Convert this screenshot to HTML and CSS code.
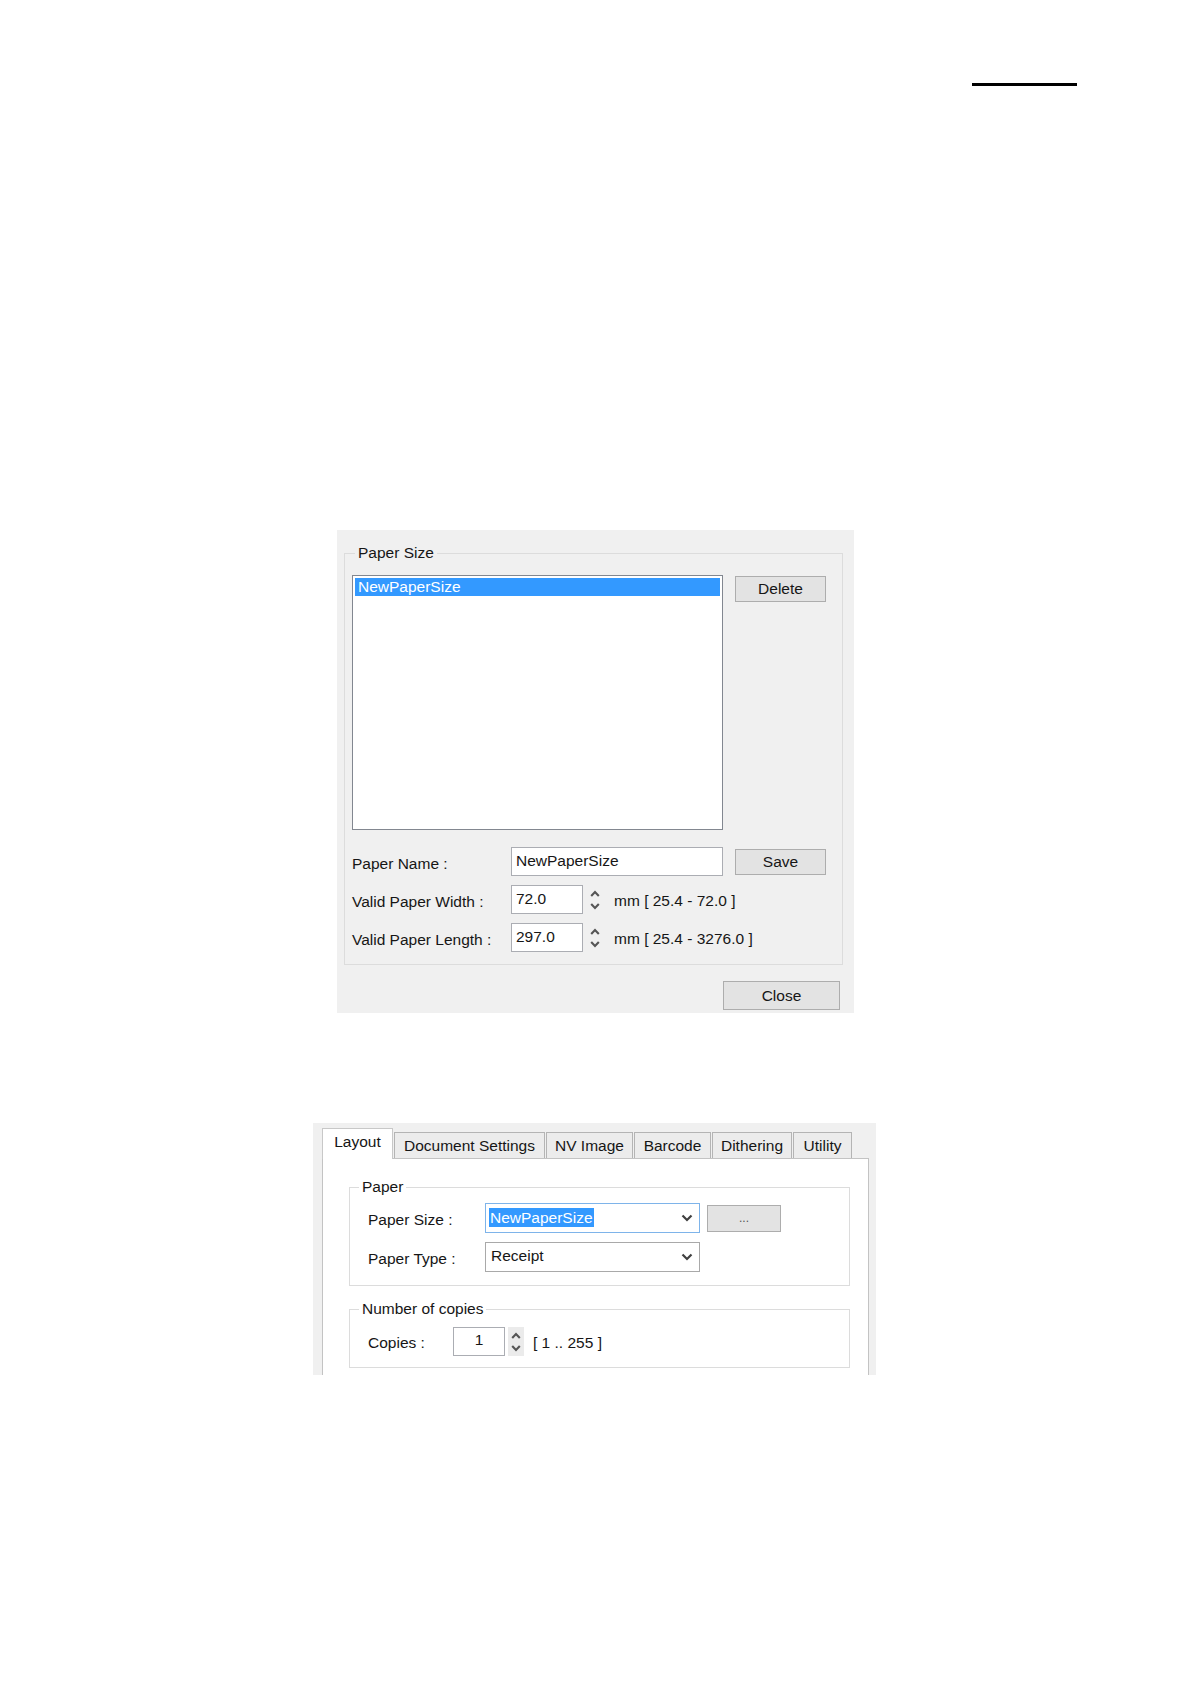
FILE: index.html
```html
<!DOCTYPE html>
<html lang="en">
<head>
<meta charset="utf-8">
<title>Paper Size</title>
<link rel="stylesheet" href="styles.css">
</head>
<body>
<div class="page">
  <div class="rule"></div>

  <div class="dlg dlg-paper">
    <fieldset class="grp grp-size">
      <legend>Paper Size</legend>
      <div class="list-row">
        <div class="listbox">
          <div class="item sel">NewPaperSize</div>
        </div>
        <div class="btn btn-side btn-delete">Delete</div>
      </div>
      <div class="form">
        <div class="row">
          <span class="lbl">Paper Name :</span>
          <div class="tb tb-name">NewPaperSize</div>
          <div class="btn btn-side">Save</div>
        </div>
        <div class="row">
          <span class="lbl">Valid Paper Width :</span>
          <div class="tb tb-num">72.0</div>
          <div class="spin">
            <svg width="10" height="7" viewBox="0 0 10 7"><path d="M1.2 6 L5 2 L8.8 6" fill="none" stroke="#555" stroke-width="2.1"/></svg>
            <svg width="10" height="7" viewBox="0 0 10 7"><path d="M1.2 1 L5 5 L8.8 1" fill="none" stroke="#555" stroke-width="2.1"/></svg>
          </div>
          <span class="unit">mm [ 25.4 - 72.0 ]</span>
        </div>
        <div class="row">
          <span class="lbl">Valid Paper Length :</span>
          <div class="tb tb-num">297.0</div>
          <div class="spin">
            <svg width="10" height="7" viewBox="0 0 10 7"><path d="M1.2 6 L5 2 L8.8 6" fill="none" stroke="#555" stroke-width="2.1"/></svg>
            <svg width="10" height="7" viewBox="0 0 10 7"><path d="M1.2 1 L5 5 L8.8 1" fill="none" stroke="#555" stroke-width="2.1"/></svg>
          </div>
          <span class="unit">mm [ 25.4 - 3276.0 ]</span>
        </div>
      </div>
    </fieldset>
    <div class="foot">
      <div class="btn btn-close">Close</div>
    </div>
  </div>

  <div class="dlg dlg-tabs">
    <div class="tabstrip">
      <div class="tab tab-sel w-layout">Layout</div>
      <div class="tab w-doc">Document Settings</div>
      <div class="tab w-nv">NV Image</div>
      <div class="tab w-bar">Barcode</div>
      <div class="tab w-dith">Dithering</div>
      <div class="tab w-util">Utility</div>
    </div>
    <div class="panel">
      <fieldset class="grp grp-paper">
        <legend>Paper</legend>
        <div class="prow">
          <span class="plbl">Paper Size :</span>
          <div class="combo combo-focus">
            <span class="hl">NewPaperSize</span>
            <svg class="chev" width="12" height="8" viewBox="0 0 12 8"><path d="M1.5 1.5 L6 6 L10.5 1.5" fill="none" stroke="#404040" stroke-width="2.2"/></svg>
          </div>
          <div class="btn btn-dots">...</div>
        </div>
        <div class="prow">
          <span class="plbl">Paper Type :</span>
          <div class="combo">
            <span class="ctext">Receipt</span>
            <svg class="chev" width="12" height="8" viewBox="0 0 12 8"><path d="M1.5 1.5 L6 6 L10.5 1.5" fill="none" stroke="#404040" stroke-width="2.2"/></svg>
          </div>
        </div>
      </fieldset>
      <fieldset class="grp grp-copies">
        <legend>Number of copies</legend>
        <div class="prow">
          <span class="clbl">Copies :</span>
          <div class="tb tb-copies">1</div>
          <div class="spin spin-box">
            <svg width="10" height="7" viewBox="0 0 10 7"><path d="M1.2 6 L5 2 L8.8 6" fill="none" stroke="#555" stroke-width="2.1"/></svg>
            <svg width="10" height="7" viewBox="0 0 10 7"><path d="M1.2 1 L5 5 L8.8 1" fill="none" stroke="#555" stroke-width="2.1"/></svg>
          </div>
          <span class="range">[ 1 .. 255 ]</span>
        </div>
      </fieldset>
    </div>
  </div>
</div>
</body>
</html>
```

FILE: styles.css
```css
* { box-sizing: border-box; }

body {
  margin: 0;
  background: #ffffff;
  font-family: "Liberation Sans", Arial, sans-serif;
  font-size: 15.5px;
  color: #161616;
}

.page {
  padding-top: 83px;
}

.rule {
  margin-left: 972px;
  width: 105px;
  border-top: 3px solid #000;
}

/* ---------- dialogs ---------- */
.dlg {
  background: #f0f0f0;
}

.dlg-paper {
  margin-top: 444px;
  margin-left: 337px;
  width: 517px;
  padding: 14px 11px 3px 7px;
}

/* group boxes */
.grp {
  margin: 0;
  border: 1px solid #dcdcdc;
  min-width: 0;
}

.grp legend {
  line-height: 18px;
  padding: 0 3px;
}

.grp-size {
  padding: 13px 16px 12px 7px;
}

.grp-size legend {
  margin-left: 3px;
}

.list-row {
  display: flex;
  align-items: flex-start;
}

.listbox {
  width: 371px;
  height: 255px;
  background: #fff;
  border: 1px solid #828790;
  padding: 2px;
}

.item {
  line-height: 18px;
  padding-left: 3px;
}

.item.sel {
  background: #3399ff;
  color: #fff;
}

.btn {
  background: #e3e3e3;
  border: 1px solid #adadad;
  display: flex;
  align-items: center;
  justify-content: center;
  color: #161616;
}

.btn-side {
  margin-left: 12px;
  width: 91px;
  height: 26px;
}

.btn-delete {
  margin-top: 1px;
}

.form {
  margin-top: 17px;
}

.row {
  display: flex;
  align-items: center;
  height: 29px;
}

.row + .row {
  margin-top: 9px;
}

.lbl {
  width: 159px;
  padding-top: 4px;
}

.tb {
  height: 29px;
  background: #fff;
  border: 1px solid #abadb3;
  padding-left: 4px;
  line-height: 25px;
}

.tb-name {
  width: 212px;
}

.tb-num {
  width: 72px;
}

.spin {
  width: 14px;
  height: 29px;
  margin-left: 5px;
  display: flex;
  flex-direction: column;
  align-items: center;
  justify-content: center;
  gap: 6px;
}

.unit {
  margin-left: 12px;
  padding-top: 3px;
}

.foot {
  display: flex;
  justify-content: flex-end;
  margin-top: 16px;
  padding-right: 3px;
}

.btn-close {
  width: 117px;
  height: 29px;
}

/* ---------- tabbed dialog ---------- */
.dlg-tabs {
  margin-top: 110px;
  margin-left: 313px;
  width: 563px;
  height: 252px;
  overflow: hidden;
  padding: 5px 7px 0 9px;
}

.tabstrip {
  display: flex;
  align-items: flex-end;
  height: 30px;
}

.tab {
  height: 26px;
  border: 1px solid #b4b4b4;
  border-bottom: none;
  background: #ececec;
  display: flex;
  align-items: center;
  justify-content: center;
  padding-top: 1px;
}

.tab + .tab {
  margin-left: 1px;
}

.tab-sel {
  height: 31px;
  margin-bottom: -1px;
  background: #fff;
  border-color: #c8c8c8;
  position: relative;
  z-index: 1;
  padding-top: 0;
  padding-bottom: 4px;
}

.w-layout { width: 71px; }
.w-doc { width: 151px; }
.w-nv { width: 87px; }
.w-bar { width: 77px; }
.w-dith { width: 80px; }
.w-util { width: 59px; }

.panel {
  background: #fff;
  border: 1px solid #c3c3c3;
  height: 400px;
  padding: 19px 18px 0 26px;
}

.grp-paper,
.grp-copies {
  padding-left: 18px;
}

.grp-paper legend,
.grp-copies legend {
  margin-left: -9px;
}

.grp-paper {
  padding-top: 7px;
  padding-bottom: 13px;
}

.grp-copies {
  margin-top: 14px;
  padding-top: 9px;
  padding-bottom: 11px;
}

.prow {
  display: flex;
  align-items: center;
}

.prow + .prow {
  margin-top: 9px;
}

.plbl {
  width: 117px;
  padding-top: 4px;
}

.clbl {
  width: 85px;
  padding-top: 2px;
}

.combo {
  width: 215px;
  height: 30px;
  border: 1px solid #a9a9a9;
  background: #fff;
  display: flex;
  align-items: center;
  justify-content: space-between;
  padding: 0 6px 0 3px;
}

.combo-focus {
  border-color: #7eb4ea;
}

.hl {
  background: #3399ff;
  color: #fff;
  line-height: 19px;
  padding: 0 1px;
  margin-bottom: 2px;
}

.ctext {
  padding-left: 2px;
  margin-bottom: 3px;
}

.btn-dots {
  margin-left: 7px;
  width: 74px;
  height: 27px;
  font-size: 12px;
  color: #555;
}

.tb-copies {
  width: 52px;
  height: 29px;
  padding-left: 0;
  text-align: center;
  line-height: 24px;
}

.spin-box {
  margin-left: 3px;
  width: 16px;
  height: 29px;
  background: #ebebeb;
}

.range {
  margin-left: 9px;
  padding-top: 2px;
}
```
